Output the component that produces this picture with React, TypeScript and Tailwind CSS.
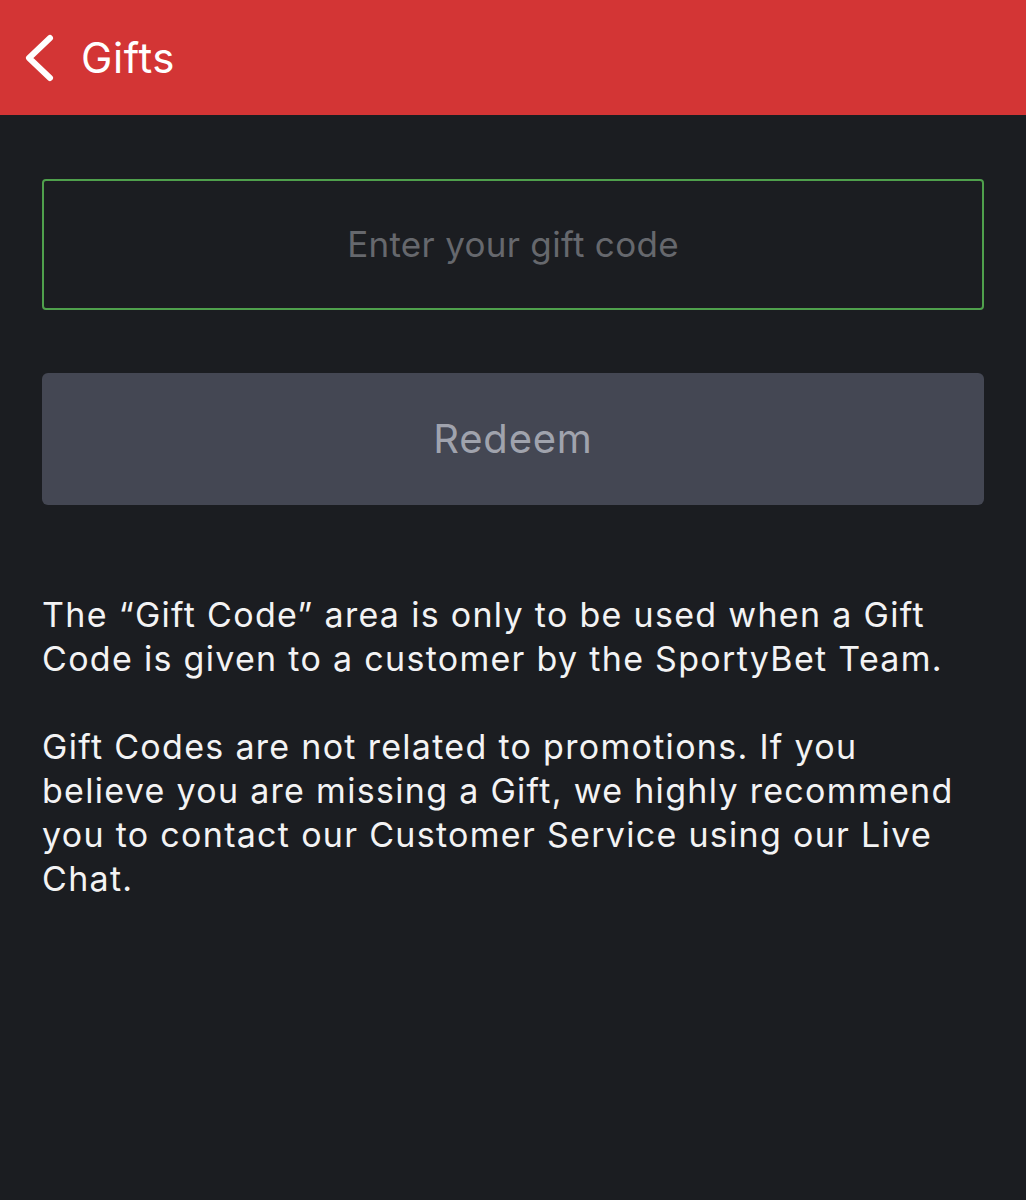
import React from "react";

export default function App() {
  return (
    <div className="w-[1026px] h-[1200px] bg-[#1b1d21] flex flex-col" style={{ fontFamily: "Inter, 'Noto Sans', sans-serif" }}>
      <header className="h-[115px] bg-[#d33535] flex items-center shrink-0">
        <svg width="40" height="64" viewBox="0 0 40 64" className="ml-[18px]">
          <path d="M32 12 L11 32 L32 52" fill="none" stroke="white" strokeWidth="6" strokeLinecap="round" strokeLinejoin="round" />
        </svg>
        <span className="ml-[23px] text-[42px] text-white leading-none tracking-[0.6px]">Gifts</span>
      </header>
      <main className="px-[42px] pt-[64px] flex flex-col">
        <div className="h-[131px] border-2 border-[#4fa04c] rounded-[4px] flex items-center justify-center">
          <span className="text-[35px] text-[#66686d] tracking-[0.3px]">Enter your gift code</span>
        </div>
        <button className="mt-[63px] h-[132px] bg-[#444753] rounded-[6px] flex items-center justify-center">
          <span className="text-[40px] text-[#a0a3ad] tracking-[0.8px]">Redeem</span>
        </button>
        <div className="mt-[88px] text-[34px] leading-[44px] text-[#f3f3f4] tracking-[1.3px]">
          <p>The “Gift Code” area is only to be used when a Gift Code is given to a customer by the SportyBet Team.</p>
          <p className="mt-[44px]">Gift Codes are not related to promotions. If you believe you are missing a Gift, we highly recommend you to contact our Customer Service using our Live Chat.</p>
        </div>
      </main>
    </div>
  );
}
